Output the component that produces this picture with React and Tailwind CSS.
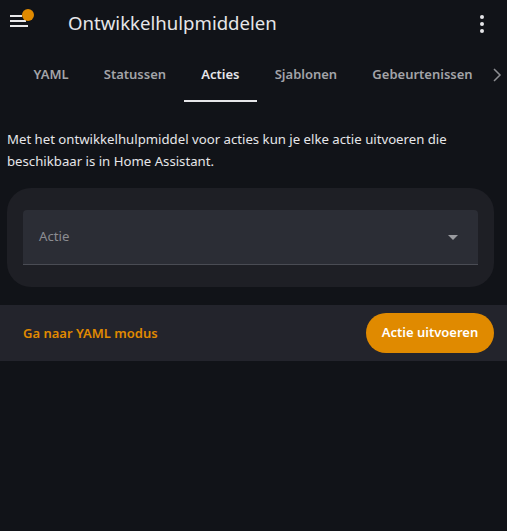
import React from "react";

export default function App() {
  const tabs = ["YAML", "Statussen", "Acties", "Sjablonen", "Gebeurtenissen"];
  return (
    <div
      className="w-[507px] h-[531px] bg-[#111318] text-[#e3e3e6] overflow-hidden"
      style={{ fontFamily: '"Noto Sans", "Open Sans", sans-serif' }}
    >
      {/* Header */}
      <div className="h-[48px] flex items-center relative">
        <div className="relative w-[48px] h-[48px] flex-none">
          <svg width="20" height="14" viewBox="0 0 20 14" className="absolute left-[10px] top-[15px]">
            <rect x="0" y="0" width="12" height="2" fill="#e8e8ea" />
            <rect x="0" y="5" width="16" height="2" fill="#e8e8ea" />
            <rect x="0" y="10" width="18" height="2" fill="#e8e8ea" />
          </svg>
          <div className="absolute left-[22px] top-[9px] w-[12px] h-[12px] rounded-full bg-[#e08a00]" />
        </div>
        <div className="ml-[20px] text-[18.6px] text-[#e6e6e9] leading-none pb-[2px]">
          Ontwikkelhulpmiddelen
        </div>
        <div className="ml-auto mr-[23px] flex flex-col gap-[3px] items-center">
          <div className="w-[4px] h-[4px] rounded-full bg-[#e6e6e9]" />
          <div className="w-[4px] h-[4px] rounded-full bg-[#e6e6e9]" />
          <div className="w-[4px] h-[4px] rounded-full bg-[#e6e6e9]" />
        </div>
      </div>

      {/* Tabs */}
      <div className="h-[54px] flex items-stretch relative">
        <div className="flex items-stretch pl-[16px] gap-0">
          {tabs.map((t) => (
            <div
              key={t}
              className={
                "relative flex items-center px-[17.6px] text-[13px] font-semibold whitespace-nowrap " +
                (t === "Acties" ? "text-[#e6e6e9]" : "text-[#a3a4a8]")
              }
            >
              {t}
              {t === "Acties" && (
                <div className="absolute left-0 right-0 bottom-[0px] h-[2px] bg-[#e6e6e9]" />
              )}
            </div>
          ))}
        </div>
        <div className="absolute right-[5px] top-[19px]">
          <svg width="10" height="16" viewBox="0 0 10 16">
            <path d="M2 2 L8 8 L2 14" stroke="#8d8e92" strokeWidth="1.5" fill="none" />
          </svg>
        </div>
      </div>

      {/* Description */}
      <div className="px-[7px] pt-[26px] text-[13.2px] leading-[22px] text-[#e6e6e9]">
        Met het ontwikkelhulpmiddel voor acties kun je elke actie uitvoeren die beschikbaar is in Home Assistant.
      </div>

      {/* Card */}
      <div className="mx-[7px] mt-[16px] mr-[13px] rounded-[24px] bg-[#1e1f25] px-[16px] py-[22px]">
        <div className="h-[55px] bg-[#2b2d35] rounded-t-[4px] border-b border-[#4a4c54] flex items-center pl-[16px] pr-[20px]">
          <span className="text-[13.2px] text-[#8b8c91]">Actie</span>
          <svg width="10" height="5" viewBox="0 0 10 5" className="ml-auto">
            <path d="M0 0 L10 0 L5 5 Z" fill="#9a9ba0" />
          </svg>
        </div>
      </div>

      {/* Footer bar */}
      <div className="mt-[18px] h-[56px] bg-[#23242c] flex items-center pl-[23px] pr-[13px]">
        <span className="text-[13px] font-semibold text-[#e08a00] pt-[2px]">Ga naar YAML modus</span>
        <button className="ml-auto h-[40px] w-[128px] whitespace-nowrap rounded-full bg-[#e08a00] text-white text-[13px] font-semibold flex items-center justify-center">
          Actie uitvoeren
        </button>
      </div>
    </div>
  );
}
